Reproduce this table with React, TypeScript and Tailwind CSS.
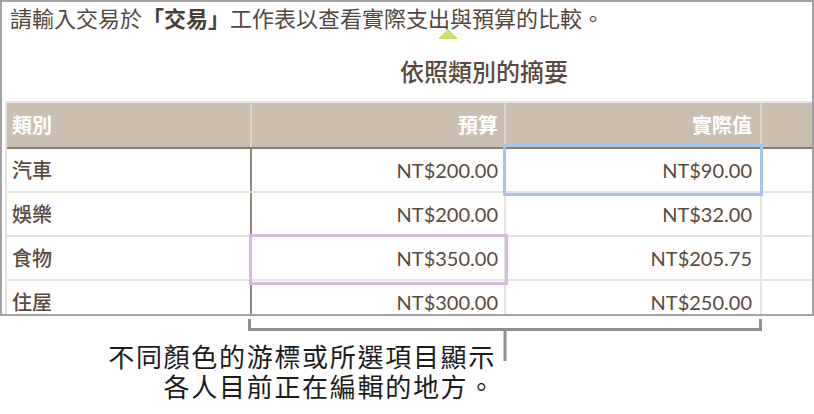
import React from "react";

const rows: [string, string, string][] = [
  ["汽車", "NT$200.00", "NT$90.00"],
  ["娛樂", "NT$200.00", "NT$32.00"],
  ["食物", "NT$350.00", "NT$205.75"],
  ["住屋", "NT$300.00", "NT$250.00"],
];

const cjk = { fontFamily: '"Noto Sans CJK TC", "Noto Sans", sans-serif' };
const tbl = { fontFamily: 'Lato, "Noto Sans CJK TC", sans-serif' };

export default function App() {
  return (
    <div className="w-[814px] h-[414px] bg-white overflow-hidden" style={cjk}>
      <div className="relative w-[814px] h-[316px] border-2 border-[#a3a3a3] overflow-hidden">
        <div className="h-[30px] pl-[8px] leading-[30px] text-[22px] text-[#524840] whitespace-nowrap">
          請輸入交易於<span className="font-bold text-[#4a3f36]">「交易」</span>工作表以查看實際支出與預算的比較。
        </div>
        <svg className="absolute left-[436px] top-[27px]" width="20" height="10" viewBox="0 0 20 10">
          <polygon points="0,10 20,10 10,0" fill="#c6e06b" />
        </svg>
        <div className="h-[69px] pt-[24px] pl-[398px] leading-[30px] text-[24px] font-medium text-[#5a4a3d] whitespace-nowrap">
          依照類別的摘要
        </div>
        <div className="ml-[3px] border-l-2 border-[#e4e0db]" style={tbl}>
          <div className="grid grid-cols-[245px_254px_256px_1fr] h-[46px] bg-[#cbbfb2] border-t-2 border-[#e8e4df] text-white font-bold text-[20px]">
            <div className="border-r-2 border-[#ddd4ca] pl-[5px] flex items-center">類別</div>
            <div className="border-r-2 border-[#ddd4ca] pr-[6px] flex items-center justify-end">預算</div>
            <div className="border-r-2 border-[#ddd4ca] pr-[8px] flex items-center justify-end">實際值</div>
            <div />
          </div>
          <div className="h-[2px] bg-[#8a7b6c]" />
          {rows.map((r, i) => (
            <div
              key={r[0]}
              className="grid grid-cols-[245px_254px_256px_1fr] h-[44px] border-b-2 border-[#e6e2dd] text-[20px] text-[#5a4a3d]"
            >
              <div className="border-r-2 border-[#94877a] pl-[5px] flex items-center font-medium">{r[0]}</div>
              <div className="relative border-r-2 border-[#e6e2dd] pr-[6px] flex items-center justify-end">
                {r[1]}
                {i === 2 && (
                  <div className="absolute left-[-3px] right-[-4px] top-[-3px] bottom-[-6px] border-[3px] border-[#d6bbe4] z-10" />
                )}
              </div>
              <div className="relative border-r-2 border-[#e6e2dd] pr-[8px] flex items-center justify-end">
                {r[2]}
                {i === 0 && (
                  <div className="absolute left-[-3px] right-[-3px] top-[-5px] bottom-[-5px] border-[3px] border-[#a2c5e8] z-10" />
                )}
              </div>
              <div />
            </div>
          ))}
        </div>
      </div>
      <div className="relative h-[98px]">
        <svg className="absolute left-0 top-0" width="814" height="50" viewBox="0 0 814 50">
          <path
            d="M249.5 3 V13.5 H760.5 V3 M505 13.5 V45"
            fill="none"
            stroke="#8f8f8f"
            strokeWidth="3"
            strokeLinejoin="miter"
          />
        </svg>
        <div className="w-[496px] pt-[25px] text-right text-[26px] leading-[30px] tracking-[1.7px] text-[#1c1c1c]">
          <div className="h-[30px]">不同顏色的游標或所選項目顯示</div>
          <div className="h-[30px]">各人目前正在編輯的地方。</div>
        </div>
      </div>
    </div>
  );
}
